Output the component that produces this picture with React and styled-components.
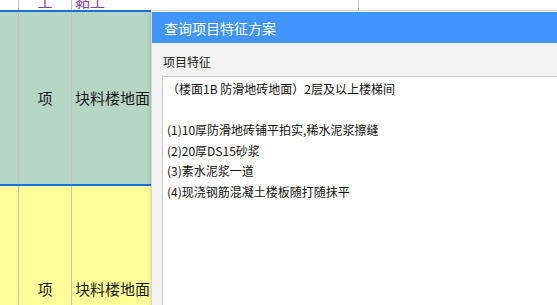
import styled, { createGlobalStyle } from 'styled-components';

const GlobalStyle = createGlobalStyle`
    html, body {
        margin: 0;
        padding: 0;
        overflow: hidden;
        background: #ffffff;
        font-family: "Noto Sans CJK SC", "Noto Sans", sans-serif;
    }
`;

// 표 컬럼 너비 (마지막 컬럼은 나머지)
const columns = [19, 53, 287, 300];

const rows = [
    { bg: '#ffffff', height: 10, tone: 'top', cells: ['', '土', '黏土', ''] },
    { bg: '#b5d5c5', height: 172, tone: 'body', cells: ['', '项', '块料楼地面', ''] },
    { bg: '#ffff99', height: 206, tone: 'body', cells: ['', '项', '块料楼地面', ''] },
];

const featureLines = [
    '（楼面1B 防滑地砖地面）2层及以上楼梯间',
    '',
    '(1)10厚防滑地砖铺平拍实,稀水泥浆擦缝',
    '(2)20厚DS15砂浆',
    '(3)素水泥浆一道',
    '(4)现浇钢筋混凝土楼板随打随抹平',
];

const App = () => {
    return (
        <>
            <GlobalStyle />
            <Page>
                <Table>
                    {rows.map((row, i) => (
                        <Row key={i} $bg={row.bg} $height={row.height} $divider={i < rows.length - 1}>
                            {row.cells.map((text, j) => (
                                <Cell key={j} $width={columns[j]} $tone={row.tone} $center={j === 1}>
                                    {text}
                                </Cell>
                            ))}
                        </Row>
                    ))}
                </Table>

                {/* 항목 특징 조회 다이얼로그 */}
                <Dialog>
                    <TitleBar>查询项目特征方案</TitleBar>
                    <Label>项目特征</Label>
                    <TextBox>
                        {featureLines.map((line, i) => (
                            <Line key={i}>{line || '\u00a0'}</Line>
                        ))}
                    </TextBox>
                </Dialog>
            </Page>
        </>
    );
};

export default App;

const Page = styled.div`
    position: relative;
    width: 557px;
    height: 305px;
    overflow: hidden;
`;

const Table = styled.div`
    display: flex;
    flex-direction: column;
`;

const Row = styled.div`
    display: flex;
    flex-shrink: 0;
    height: ${(p) => p.$height}px;
    background: ${(p) => p.$bg};
    border-bottom: ${(p) => (p.$divider ? '2px solid #1c6fdf' : 'none')};
`;

const Cell = styled.div`
    box-sizing: border-box;
    flex-shrink: 0;
    width: ${(p) => p.$width}px;
    border-right: 1px solid #c3c3c3;
    display: flex;
    align-items: ${(p) => (p.$tone === 'top' ? 'flex-end' : 'center')};
    justify-content: ${(p) => (p.$center ? 'center' : 'flex-start')};
    padding-left: ${(p) => (p.$center ? 0 : 3)}px;
    overflow: hidden;
    font-size: 15px;
    line-height: 18px;
    color: ${(p) => (p.$tone === 'top' ? '#8a3fae' : '#1a1a1a')};
    white-space: nowrap;
`;

const Dialog = styled.div`
    position: absolute;
    left: 151px;
    top: 10px;
    width: 440px;
    height: 320px;
    background: #f3f3f3;
    border: 1px solid #d6d6d6;
    box-shadow: -1px 0 3px rgb(0 0 0 / 12%);
    display: flex;
    flex-direction: column;
`;

const TitleBar = styled.div`
    height: 31px;
    border-top: 1px solid #ffffff;
    background: #4096fc;
    color: #ffffff;
    font-size: 14px;
    line-height: 33px;
    padding-left: 12px;
`;

const Label = styled.div`
    padding: 9px 0 0 11px;
    font-size: 12px;
    line-height: 20px;
    color: #222222;
`;

const TextBox = styled.div`
    flex: 1;
    margin: 4px 0 0 10px;
    padding: 2px 4px;
    background: #ffffff;
    border-top: 1px solid #c8c8c8;
    border-left: 1px solid #c8c8c8;
`;

const Line = styled.div`
    font-size: 12px;
    line-height: 20.5px;
    color: #111111;
    white-space: nowrap;
`;
